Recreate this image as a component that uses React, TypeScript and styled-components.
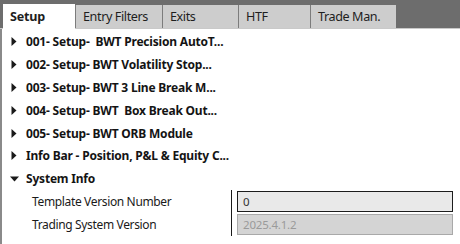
import React from 'react'
import styled, { createGlobalStyle } from 'styled-components'

const GlobalStyle = createGlobalStyle`
  html, body {
    margin: 0;
    padding: 0;
    background: #ffffff;
  }
  body {
    font-family: "Noto Sans", "Open Sans", sans-serif;
    color: #1a1a1a;
  }
`

const Window = styled.div`
  width: 460px;
  height: 244px;
  background: #ffffff;
  display: flex;
  flex-direction: column;
  overflow: hidden;
`

const TabBar = styled.div`
  height: 29px;
  background: #6d6d6d;
  border-bottom: 1px solid #c9c9c9;
  display: flex;
  align-items: flex-start;
  padding: 4px 0 0 3px;
  box-sizing: border-box;
  flex: none;
`

const Tab = styled.div<{ $active?: boolean; $w: number }>`
  width: ${({ $w }) => $w}px;
  box-sizing: border-box;
  height: ${({ $active }) => ($active ? '26px' : '23px')};
  margin-top: ${({ $active }) => ($active ? '0' : '1px')};
  background: ${({ $active }) => ($active ? '#ffffff' : '#cdcdcd')};
  border-left: ${({ $active }) => ($active ? 'none' : '1px solid #7c7c7c')};
  font-size: 12.6px;
  letter-spacing: ${({ $active }) => ($active ? '-0.2px' : '-0.4px')};
  font-weight: ${({ $active }) => ($active ? 700 : 400)};
  color: #1e1e1e;
  display: flex;
  align-items: center;
  padding-left: 7px;
  padding-bottom: ${({ $active }) => ($active ? '2px' : '0')};
  position: relative;
  z-index: 1;
`

const Body = styled.div`
  flex: 1;
  border-left: 2px solid #8a8a8a;
  padding-top: 1px;
  display: flex;
  flex-direction: column;
`

const Row = styled.div`
  height: 22.9px;
  display: flex;
  align-items: center;
  font-size: 12px;
  white-space: pre;
`

const Toggle = styled.span`
  width: 24px;
  display: flex;
  justify-content: center;
  flex: none;
`

const GroupLabel = styled.span`
  font-weight: 700;
  letter-spacing: -0.2px;
  color: #141414;
`

const PropRow = styled(Row)`
  align-items: stretch;
`

const PropLabel = styled.div`
  width: 199px;
  padding-left: 30px;
  border-right: 1px solid #1a1a1a;
  letter-spacing: -0.35px;
  display: flex;
  align-items: center;
  flex: none;
`

const PropValue = styled.div`
  flex: 1;
  padding: 1px 7px 1px 5px;
  display: flex;
`

const ValueBox = styled.div<{ $readOnly?: boolean }>`
  flex: 1;
  box-sizing: border-box;
  background: ${({ $readOnly }) => ($readOnly ? '#d4d4d4' : '#e9e9e9')};
  border: 1px solid ${({ $readOnly }) => ($readOnly ? '#a9a9a9' : '#1c1c1c')};
  color: ${({ $readOnly }) => ($readOnly ? '#9a9a9a' : '#333333')};
  font-size: 11.5px;
  letter-spacing: -0.2px;
  display: flex;
  align-items: center;
  padding-left: 5px;
`

const Caret = ({ open }: { open?: boolean }) =>
  open ? (
    <svg width="9" height="6" viewBox="0 0 9 6">
      <path d="M0 0.5 L9 0.5 L4.5 5.5 Z" fill="#1a1a1a" />
    </svg>
  ) : (
    <svg width="6" height="9" viewBox="0 0 6 9">
      <path d="M0.5 0 L5.5 4.5 L0.5 9 Z" fill="#1a1a1a" />
    </svg>
  )

const tabs = [
  { label: 'Setup', w: 72, active: true },
  { label: 'Entry Filters', w: 87 },
  { label: 'Exits', w: 76 },
  { label: 'HTF', w: 72 },
  { label: 'Trade Man.', w: 86 },
]

const groups = [
  '001- Setup-  BWT Precision AutoT...',
  '002- Setup- BWT Volatility Stop...',
  '003- Setup- BWT 3 Line Break M...',
  '004- Setup- BWT  Box Break Out...',
  '005- Setup- BWT ORB Module',
  'Info Bar - Position, P&L & Equity C...',
]

export default function App() {
  return (
    <Window>
      <GlobalStyle />
      <TabBar>
        {tabs.map((t) => (
          <Tab key={t.label} $active={t.active} $w={t.w}>
            {t.label}
          </Tab>
        ))}
      </TabBar>
      <Body>
        {groups.map((g) => (
          <Row key={g}>
            <Toggle>
              <Caret />
            </Toggle>
            <GroupLabel>{g}</GroupLabel>
          </Row>
        ))}
        <Row>
          <Toggle>
            <Caret open />
          </Toggle>
          <GroupLabel>System Info</GroupLabel>
        </Row>
        <PropRow>
          <PropLabel>Template Version Number</PropLabel>
          <PropValue>
            <ValueBox>0</ValueBox>
          </PropValue>
        </PropRow>
        <PropRow>
          <PropLabel>Trading System Version</PropLabel>
          <PropValue>
            <ValueBox $readOnly>2025.4.1.2</ValueBox>
          </PropValue>
        </PropRow>
      </Body>
    </Window>
  )
}
